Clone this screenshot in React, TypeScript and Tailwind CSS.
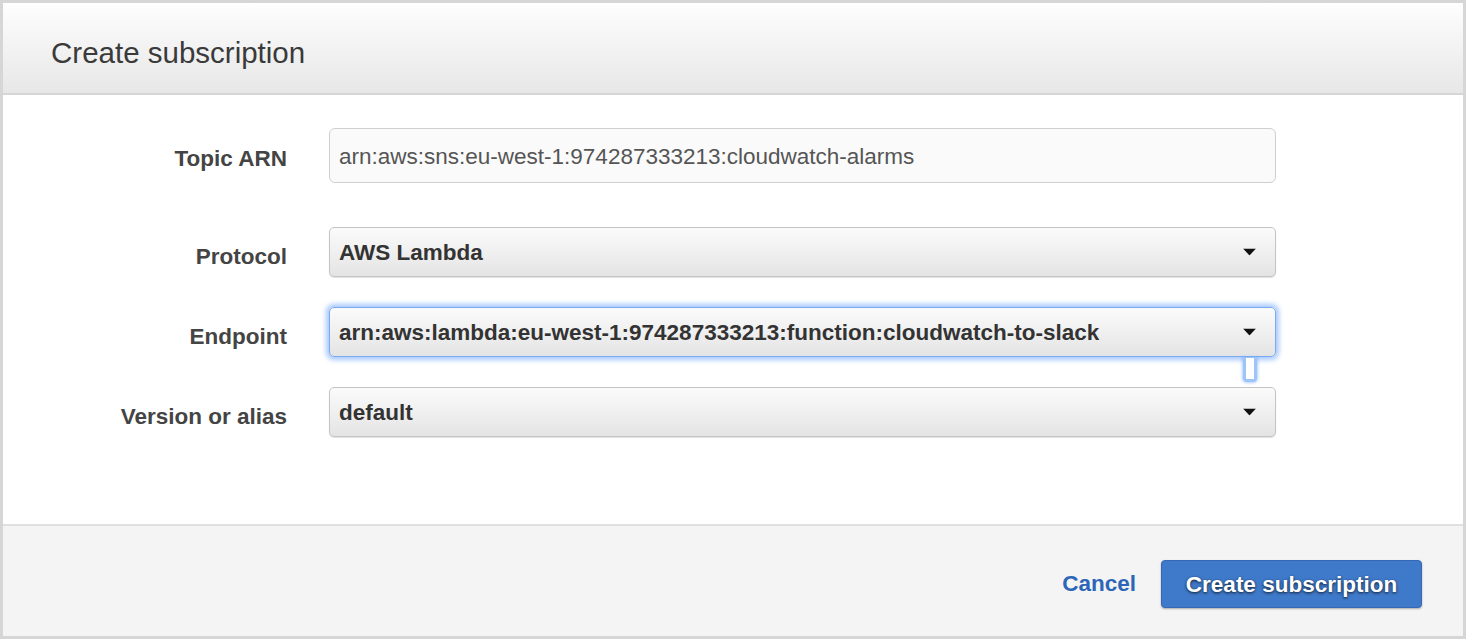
import React from 'react';

const font = { fontFamily: '"Liberation Sans", Arial, Helvetica, sans-serif' };

function Caret() {
  return (
    <svg width="13" height="7" viewBox="0 0 13 7" className="absolute right-[19px] top-1/2 -translate-y-1/2">
      <path d="M0 0 L13 0 L6.5 7 Z" fill="#111" />
    </svg>
  );
}

function Row({ label, children, shift = 'pt-[10px]' }: { label: string; children: React.ReactNode; shift?: string }) {
  return (
    <div className="flex items-center">
      <div className={'w-[284px] shrink-0 text-right text-[22.5px] font-bold text-[#444] ' + shift}>{label}</div>
      <div className="ml-[42px] w-[947px] shrink-0">{children}</div>
    </div>
  );
}

function Select({ value, focused }: { value: string; focused?: boolean }) {
  return (
    <div
      className={
        'relative flex h-[50px] items-center rounded-[5px] border bg-gradient-to-b from-[#fbfbfb] to-[#e4e4e4] pl-[9px] text-[22.5px] font-bold text-[#333] ' +
        (focused
          ? 'border-[#79aaf2] shadow-[0_0_5px_3px_rgba(110,165,250,0.6)]'
          : 'border-[#c4c4c4] shadow-[0_1px_1px_rgba(0,0,0,0.12)]')
      }
    >
      <span className="pt-[2px]">{value}</span>
      <Caret />
      {focused && (
        <div className="absolute right-[18px] top-[50px] h-[24px] w-[14px] rounded-b-[4px] border-[3px] border-t-0 border-[#9fc4f8] bg-white shadow-[0_0_3px_1px_rgba(110,165,250,0.55)]" />
      )}
    </div>
  );
}

export default function App() {
  return (
    <div style={font} className="flex h-[639px] w-[1466px] flex-col border-[3px] border-[#d6d6d6] bg-white">
      <div className="flex h-[92px] shrink-0 items-center border-b-2 border-[#d6d6d6] bg-gradient-to-b from-[#fefefe] to-[#e7e7e7] pl-[48px] pt-[10px]">
        <h1 className="text-[29.5px] text-[#3a3a3a]">Create subscription</h1>
      </div>

      <div className="flex flex-1 flex-col pt-[33px]">
        <Row label="Topic ARN" shift="pt-[6px]">
          <div className="flex h-[55px] items-center rounded-[6px] border border-[#cfcfcf] bg-[#fafafa] pl-[9px] pt-[2px] text-[22.5px] text-[#555]">
            arn:aws:sns:eu-west-1:974287333213:cloudwatch-alarms
          </div>
        </Row>
        <div className="h-[44px]" />
        <Row label="Protocol">
          <Select value="AWS Lambda" />
        </Row>
        <div className="h-[30px]" />
        <Row label="Endpoint">
          <Select value="arn:aws:lambda:eu-west-1:974287333213:function:cloudwatch-to-slack" focused />
        </Row>
        <div className="h-[30px]" />
        <Row label="Version or alias">
          <Select value="default" />
        </Row>
      </div>

      <div className="flex h-[112px] shrink-0 items-center justify-end border-t-2 border-[#e0e0e0] bg-[#f4f4f4] pr-[41px] pt-[6px]">
        <a className="mr-[25px] text-[22.5px] font-bold text-[#2d66b8]">Cancel</a>
        <button className="flex h-[48px] w-[261px] items-center justify-center rounded-[4px] border border-[#3569b5] bg-[#3f79c9] pt-[2px] text-[22.5px] font-bold text-white shadow-[0_1px_2px_rgba(0,0,0,0.3)] [text-shadow:0_1px_3px_rgba(0,0,0,0.8)]">
          Create subscription
        </button>
      </div>
    </div>
  );
}
